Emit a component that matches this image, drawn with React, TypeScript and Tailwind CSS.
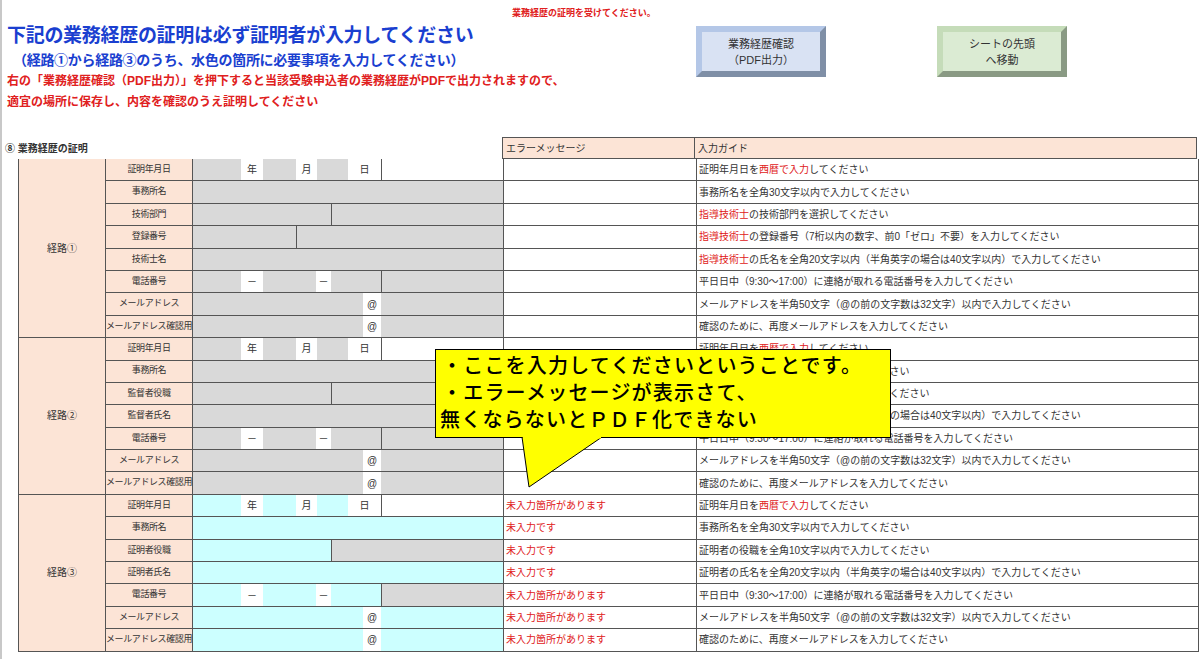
import React from "react";

type Seg = { w: number; fill: "in" | "white" | "gray"; text?: string; bl?: boolean };
type Row = { label: string; kind: string; err?: string; guide: React.ReactNode };

const R = ({ children }: { children: React.ReactNode }) => <span className="text-[#e02020]">{children}</span>;

function segs(kind: string): Seg[] {
  switch (kind) {
    case "date":
      return [
        { w: 48, fill: "in" }, { w: 22, fill: "white", text: "年" }, { w: 33, fill: "in" },
        { w: 21, fill: "white", text: "月" }, { w: 31, fill: "in" }, { w: 33, fill: "white", text: "日" },
        { w: 122, fill: "white", bl: true },
      ];
    case "phone":
      return [
        { w: 48, fill: "in" }, { w: 22, fill: "white", text: "－" }, { w: 53, fill: "in" },
        { w: 15, fill: "white", text: "－" }, { w: 50, fill: "in" }, { w: 122, fill: "gray", bl: true },
      ];
    case "mail":
      return [{ w: 170, fill: "in" }, { w: 18, fill: "white", text: "@" }, { w: 122, fill: "in" }];
    case "split330":
      return [{ w: 138, fill: "in" }, { w: 172, fill: "gray", bl: true }];
    case "split295":
      return [{ w: 103, fill: "in" }, { w: 207, fill: "gray", bl: true }];
    default:
      return [{ w: 310, fill: "in" }];
  }
}

const phoneG = "平日日中（9:30～17:00）に連絡が取れる電話番号を入力してください";
const mailG = "メールアドレスを半角50文字（@の前の文字数は32文字）以内で入力してください";
const confG = "確認のために、再度メールアドレスを入力してください";
const dateG = <>証明年月日を<R>西暦で入力</R>してください</>;
const officeG = "事務所名を全角30文字以内で入力してください";

const routes: { name: string; cyan: boolean; rows: Row[] }[] = [
  {
    name: "経路①", cyan: false, rows: [
      { label: "証明年月日", kind: "date", guide: dateG },
      { label: "事務所名", kind: "full", guide: officeG },
      { label: "技術部門", kind: "split330", guide: <><R>指導技術士</R>の技術部門を選択してください</> },
      { label: "登録番号", kind: "split295", guide: <><R>指導技術士</R>の登録番号（7桁以内の数字、前0「ゼロ」不要）を入力してください</> },
      { label: "技術士名", kind: "full", guide: <><R>指導技術士</R>の氏名を全角20文字以内（半角英字の場合は40文字以内）で入力してください</> },
      { label: "電話番号", kind: "phone", guide: phoneG },
      { label: "メールアドレス", kind: "mail", guide: mailG },
      { label: "メールアドレス確認用", kind: "mail", guide: confG },
    ],
  },
  {
    name: "経路②", cyan: false, rows: [
      { label: "証明年月日", kind: "date", guide: dateG },
      { label: "事務所名", kind: "full", guide: officeG },
      { label: "監督者役職", kind: "split330", guide: "監督者の役職を全角10文字以内で入力してください" },
      { label: "監督者氏名", kind: "full", guide: "監督者の氏名を全角20文字以内（半角英字の場合は40文字以内）で入力してください" },
      { label: "電話番号", kind: "phone", guide: phoneG },
      { label: "メールアドレス", kind: "mail", guide: mailG },
      { label: "メールアドレス確認用", kind: "mail", guide: confG },
    ],
  },
  {
    name: "経路③", cyan: true, rows: [
      { label: "証明年月日", kind: "date", err: "未入力箇所があります", guide: dateG },
      { label: "事務所名", kind: "full", err: "未入力です", guide: officeG },
      { label: "証明者役職", kind: "split330", err: "未入力です", guide: "証明者の役職を全角10文字以内で入力してください" },
      { label: "証明者氏名", kind: "full", err: "未入力です", guide: "証明者の氏名を全角20文字以内（半角英字の場合は40文字以内）で入力してください" },
      { label: "電話番号", kind: "phone", err: "未入力箇所があります", guide: phoneG },
      { label: "メールアドレス", kind: "mail", err: "未入力箇所があります", guide: mailG },
      { label: "メールアドレス確認用", kind: "mail", err: "未入力箇所があります", guide: confG },
    ],
  },
];

function InputCell({ kind, cyan }: { kind: string; cyan: boolean }) {
  return (
    <div className="flex h-full border-r border-b border-[#555]">
      {segs(kind).map((s, i) => (
        <div
          key={i}
          style={{ width: s.w }}
          className={`h-full flex items-center justify-center text-[10px] text-[#333] ${s.bl ? "border-l border-[#555]" : ""} ${
            s.fill === "white" ? "bg-white" : s.fill === "gray" ? "bg-[#d9d9d9]" : cyan ? "bg-[#ccffff]" : "bg-[#d9d9d9]"
          }`}
        >
          {s.text}
        </div>
      ))}
    </div>
  );
}

function Bevel({ label, face, dark, light }: { label: React.ReactNode; face: string; dark: string; light: string }) {
  return (
    <div
      className={`w-[130px] h-[51px] border-[6px] flex items-center justify-center text-center text-[11px] leading-[16px] text-[#333] ${face}`}
      style={{ borderTopColor: light, borderLeftColor: light, borderRightColor: dark, borderBottomColor: dark }}
    >
      {label}
    </div>
  );
}

export default function App() {
  return (
    <div className="relative w-[1200px] h-[659px] bg-white overflow-hidden border-l-2 border-[#c8c8c8]" style={{ fontFamily: '"Liberation Sans", "Noto Sans CJK JP", sans-serif' }}>
      {/* header */}
      <div className="flex h-[137px]">
        <div className="w-[690px] pl-[5px]">
          <div className="h-[20px] flex items-end pl-[505px] text-[9px] font-bold text-[#e02020] whitespace-nowrap">業務経歴の証明を受けてください。</div>
          <div className="mt-[3px] text-[19px] font-bold text-[#1a3fd0] leading-[26px] tracking-[-0.3px]">下記の業務経歴の証明は必ず証明者が入力してください</div>
          <div className="text-[14px] font-bold text-[#1a3fd0] leading-[22px] pl-[6px] tracking-[-0.3px]">（経路①から経路③のうち、水色の箇所に必要事項を入力してください）</div>
          <div className="text-[12px] font-bold text-[#e02020] leading-[21px] whitespace-nowrap">右の「業務経歴確認（PDF出力）」を押下すると当該受験申込者の業務経歴がPDFで出力されますので、</div>
          <div className="text-[12px] font-bold text-[#e02020] leading-[21px]">適宜の場所に保存し、内容を確認のうえ証明してください</div>
        </div>
        <div className="flex gap-[111px] pt-[26px] pl-[4px]">
          <Bevel label={<>業務経歴確認<br />（PDF出力）</>} face="bg-[#d9e2f3]" light="#b4c7e7" dark="#7f8fa6" />
          <Bevel label={<>シートの先頭<br />へ移動</>} face="bg-[#dbebd3]" light="#c5dcb9" dark="#8a9a84" />
        </div>
      </div>

      {/* header row of table */}
      <div className="flex h-[22px] text-[10px] text-[#333]">
        <div className="w-[500px] flex items-center pl-[3px] font-bold">⑧ 業務経歴の証明</div>
        <div className="w-[193px] bg-[#fce4d6] border border-[#555] flex items-center pl-[3px]">エラーメッセージ</div>
        <div className="w-[502px] bg-[#fce4d6] border-t border-r border-b border-[#555] flex items-center pl-[3px]">入力ガイド</div>
      </div>

      <div className="ml-[16px] border-l border-[#555] text-[10px] text-[#333]">
        {routes.map((r) => (
          <div key={r.name} className="flex">
            <div className="w-[87px] bg-[#fce4d6] border-r border-b border-[#555] flex items-center justify-center">{r.name}</div>
            <div className="flex flex-col">
              {r.rows.map((row, i) => (
                <div key={i} className="flex h-[22.4px]">
                  <div className="w-[87px] bg-[#fce4d6] border-r border-b border-[#555] flex items-center justify-center whitespace-nowrap text-[9px] tracking-[-0.4px]">{row.label}</div>
                  <div className="w-[311px]"><InputCell kind={row.kind} cyan={r.cyan} /></div>
                  <div className="w-[193px] border-r border-b border-[#555] flex items-center pl-[2px] text-[#e02020]">{row.err}</div>
                  <div className="w-[502px] border-r border-b border-[#555] flex items-center pl-[2px] whitespace-nowrap overflow-hidden">{row.guide}</div>
                </div>
              ))}
            </div>
          </div>
        ))}
      </div>

      {/* callout */}
      <div className="absolute left-[433px] top-[349px] w-[456px] h-[89px] bg-[#ffff00] border border-black px-[4px] pt-[1px] text-[20px] font-medium leading-[27px] text-black tracking-[1.2px]" style={{ fontFamily: '"Noto Sans CJK JP", sans-serif' }}>
        <div className="pl-[2px] whitespace-nowrap">・ここを入力してくださいということです。</div>
        <div className="pl-[2px]">・エラーメッセージが表示さて、</div>
        <div>無くならないとＰＤＦ化できない</div>
      </div>
      <svg className="absolute left-[500px] top-[437px]" width="110" height="52" viewBox="0 0 110 52">
        <polygon points="20,0 27,50 100,0" fill="#ffff00" stroke="black" strokeWidth="1" />
        <line x1="21" y1="0.5" x2="99" y2="0.5" stroke="#ffff00" strokeWidth="2" />
      </svg>
    </div>
  );
}
